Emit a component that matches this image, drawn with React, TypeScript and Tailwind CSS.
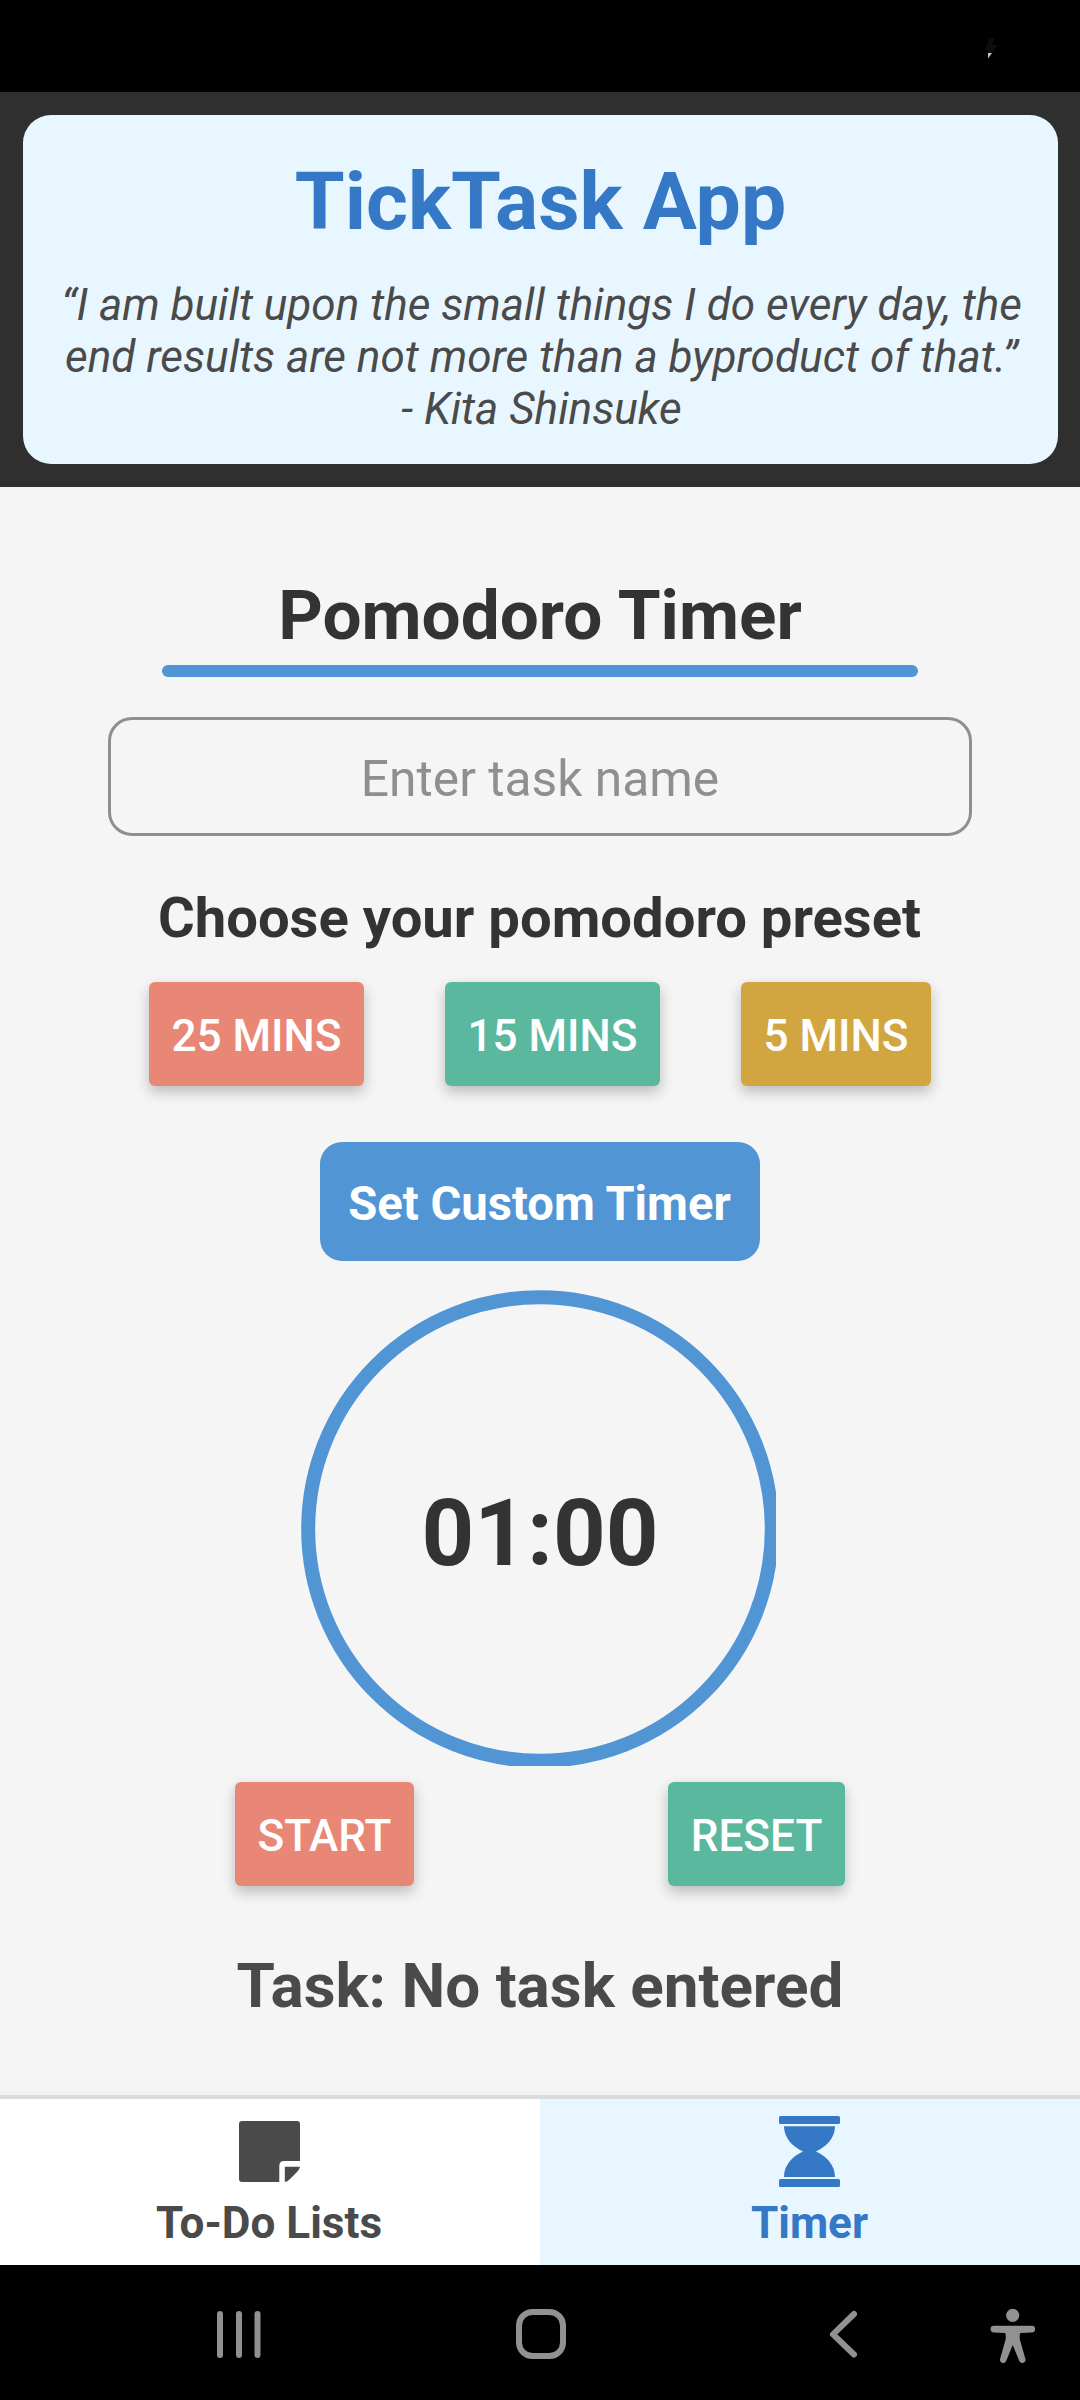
import React from "react";

function StatusBar() {
  return (
    <div className="flex h-[92px] shrink-0 justify-end bg-black pt-[38px] pr-[82px]">
      <svg width="13" height="21" viewBox="0 0 13 21">
        <path d="M4 0H9.5L7.5 7H13L3 20V12H0Z" fill="#0d0d0d" />
        <path d="M3 15H7L3 20.5Z" fill="#c4c4c4" />
      </svg>
    </div>
  );
}

function Header() {
  return (
    <header className="h-[395px] shrink-0 bg-[#2f2f2f] pt-[23px] pr-[22px] pl-[23px]">
      <div className="h-[349px] rounded-[28px] bg-[#e8f7ff] pt-[39px] text-center">
        <h1 className="text-[80.600px] leading-[96px] font-bold text-[#3478c6]">TickTask App</h1>
        <p className="mt-[29px] pl-[2px] text-[44.100px] leading-[52px] whitespace-nowrap text-[#4a4a4a] italic">
          “I am built upon the small things I do every day, the
          <br />
          end results are not more than a byproduct of that.”
          <br />- Kita Shinsuke
        </p>
      </div>
    </header>
  );
}

function RaisedButton({ label, className }: { label: string; className: string }) {
  return (
    <button
      className={
        "flex h-[104px] shrink-0 items-center justify-center rounded-[6px] pt-[4px] text-[44.100px] leading-[52px] font-medium whitespace-nowrap text-white shadow-[0_6px_14px_rgba(0,0,0,0.24)] " +
        className
      }
    >
      {label}
    </button>
  );
}

function TimerDial() {
  return (
    <div className="mt-[29px] ml-[301px] grid h-[476px] w-[475px] place-items-center overflow-hidden">
      <svg className="col-start-1 row-start-1" width="475" height="476" viewBox="0 0 475 476">
        <circle cx="239" cy="239" r="231.8" fill="none" stroke="#5195d5" strokeWidth="14" />
      </svg>
      <span className="col-start-1 row-start-1 pt-[11px] pl-[3px] text-[92px] leading-[108px] font-bold text-[#333333]">
        01:00
      </span>
    </div>
  );
}

function TabBar() {
  return (
    <nav className="flex h-[166px] shrink-0 text-center text-[44.100px] leading-[52px] font-bold">
      <div className="flex w-1/2 flex-col items-center bg-white pt-[22px] text-[#4a4a4a]">
        <svg className="mr-[1px]" width="61" height="61" viewBox="0 0 61 61" fill="currentColor">
          <path d="M3 0H58Q61 0 61 3V40H45Q40.300 40 40.300 45V61H3Q0 61 0 58V3Q0 0 3 0Z" />
          <path d="M45.800 45.800H61Q60.500 48.500 58.500 50.500L50.500 58.500Q48.500 60.500 45.800 61Z" />
        </svg>
        <span className="mt-[15px] pr-[2px]">To-Do Lists</span>
      </div>
      <div className="flex w-1/2 flex-col items-center bg-[#e8f7ff] pt-[17px] text-[#3478c6]">
        <svg className="mr-[1px]" width="61" height="71" viewBox="0 0 61 71" fill="currentColor">
          <rect width="61" height="8" rx="1.500" />
          <rect y="63" width="61" height="8" rx="1.500" />
          <path d="M5 10.300H56C56 22 47.500 30.500 37 35.600C47.500 40.500 56 49 56 61H5C5 49 13.500 40.500 24 35.600C13.500 30.500 5 22 5 10.300Z" />
        </svg>
        <span className="mt-[10px] pr-[1px]">Timer</span>
      </div>
    </nav>
  );
}

function SystemNav() {
  return (
    <div className="flex h-[135px] shrink-0 items-start bg-black pt-[42px]">
      <svg className="ml-[214px]" width="50" height="56" viewBox="0 0 50 56">
        <path d="M6 7V48M25 7V48M43.500 7V48" stroke="#919191" strokeWidth="6" strokeLinecap="round" />
      </svg>
      <svg className="ml-[249px]" width="56" height="56" viewBox="0 0 56 56">
        <rect x="6" y="5" width="44" height="44" rx="13.500" fill="none" stroke="#919191" strokeWidth="6" />
      </svg>
      <svg className="ml-[256px]" width="40" height="56" viewBox="0 0 40 56">
        <path d="M29 7L8 27.300L29 47.500" fill="none" stroke="#919191" strokeWidth="6" strokeLinecap="round" strokeLinejoin="round" />
      </svg>
      <svg className="ml-[124px]" width="48" height="60" viewBox="0 0 48 60" fill="#919191">
        <circle cx="23.700" cy="8.300" r="6.600" />
        <path d="M4.900 18.700H42.800A3.300 3.300 0 0 1 42.800 25.400L31.500 26Q30.500 26.500 30.700 32L36.300 51.500A3.100 3.100 0 0 1 30.300 54L23.700 38L17.200 54A3.100 3.100 0 0 1 11.200 51.500L16.700 32Q17 26.500 16 26L4.900 25.400A3.300 3.300 0 0 1 4.900 18.700Z" />
      </svg>
    </div>
  );
}

export default function App() {
  return (
    <div className="flex h-[2400px] w-[1080px] flex-col overflow-hidden bg-[#f5f5f5] font-['Roboto',sans-serif]">
      <StatusBar />
      <Header />
      <main className="h-[1608px] shrink-0 pt-[89px]">
        <h2 className="text-center text-[69.300px] leading-[80px] font-bold text-[#333333]">Pomodoro Timer</h2>
        <div className="mx-auto mt-[9px] h-[12px] w-[756px] rounded-full bg-[#5195d5]" />
        <input
          placeholder="Enter task name"
          className="mx-auto mt-[40px] block h-[119px] w-[864px] rounded-[24px] border-[3px] border-[#8f8f8f] bg-transparent pt-[5px] text-center text-[49.700px] text-[#333333] placeholder:text-[#8f8f8f]"
        />
        <h3 className="mt-[49px] pr-[1px] text-center text-[56.200px] leading-[66px] font-bold text-[#333333]">
          Choose your pomodoro preset
        </h3>
        <div className="mt-[31px] flex justify-center gap-[81px]">
          <RaisedButton label="25 MINS" className="w-[215px] bg-[#e98777]" />
          <RaisedButton label="15 MINS" className="w-[215px] bg-[#5ab89e]" />
          <RaisedButton label="5 MINS" className="w-[190px] bg-[#d1a641]" />
        </div>
        <button className="mx-auto mt-[56px] flex h-[119px] w-[440px] items-center justify-center rounded-[22px] bg-[#5195d5] pt-[5px] pr-[1px] text-[47.200px] leading-[56px] font-bold text-white">
          Set Custom Timer
        </button>
        <TimerDial />
        <div className="mt-[16px] flex justify-center gap-[254px]">
          <RaisedButton label="START" className="w-[179px] bg-[#e98777]" />
          <RaisedButton label="RESET" className="w-[177px] bg-[#5ab89e]" />
        </div>
        <p className="mt-[64px] text-center text-[62px] leading-[72px] font-bold text-[#4a4a4a]">
          Task: No task entered
        </p>
      </main>
      <div className="h-[4px] shrink-0 bg-[#d9dada] shadow-[0_-2px_8px_rgba(0,0,0,0.05)]" />
      <TabBar />
      <SystemNav />
    </div>
  );
}
